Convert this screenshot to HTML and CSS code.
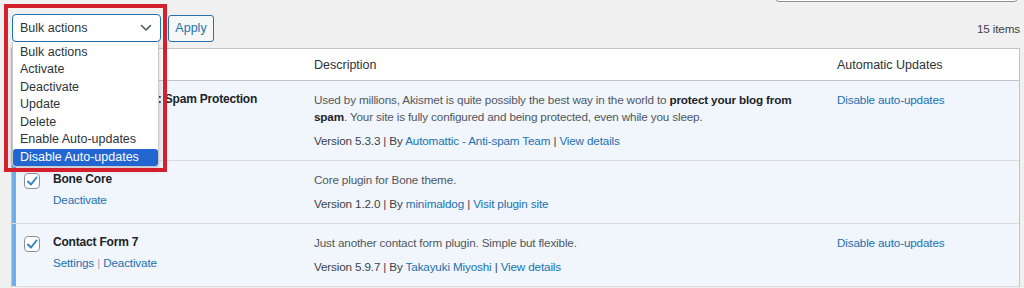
FILE: index.html
```html
<!DOCTYPE html>
<html lang="en">
<head>
<meta charset="utf-8">
<title>Plugins</title>
<link rel="stylesheet" href="styles.css">
</head>
<body>
<div class="page">
  <div class="search-row"><div class="search-edge"></div></div>
  <div class="tablenav">
    <div class="bulk">
      <div class="select">
        <span>Bulk actions</span>
        <svg class="chev" width="12" height="8" viewBox="0 0 12 8"><path d="M1.5 1.5 L6 6 L10.5 1.5" fill="none" stroke="#50575e" stroke-width="1.6" stroke-linecap="round" stroke-linejoin="round"/></svg>
      </div>
      <button class="apply">Apply</button>
    </div>
    <div class="count">15 items</div>
  </div>

  <div class="table">
    <div class="row head">
      <div class="cell check"></div>
      <div class="cell"></div>
      <div class="cell">Description</div>
      <div class="cell">Automatic Updates</div>
    </div>

    <div class="row active">
      <div class="cell check"><span class="cb"><svg width="14" height="14" viewBox="0 0 14 14"><path d="M3 7.5 L6 10.5 L11.5 3.5" fill="none" stroke="#3582c4" stroke-width="2" stroke-linecap="round" stroke-linejoin="round"/></svg></span></div>
      <div class="cell name">
        <div class="title">Akismet Anti-spam: Spam Protection</div>
        <div class="actions"><a>Deactivate</a> <span class="sep">|</span> <a>Settings</a></div>
      </div>
      <div class="cell desc">
        <div class="text">Used by millions, Akismet is quite possibly the best way in the world to <b>protect your blog from<br>spam</b>. Your site is fully configured and being protected, even while you sleep.</div>
        <div class="ver">Version 5.3.3 | By <a>Automattic - Anti-spam Team</a> | <a>View details</a></div>
      </div>
      <div class="cell auto"><a>Disable auto-updates</a></div>
    </div>

    <div class="row active">
      <div class="cell check"><span class="cb"><svg width="14" height="14" viewBox="0 0 14 14"><path d="M3 7.5 L6 10.5 L11.5 3.5" fill="none" stroke="#3582c4" stroke-width="2" stroke-linecap="round" stroke-linejoin="round"/></svg></span></div>
      <div class="cell name">
        <div class="title">Bone Core</div>
        <div class="actions"><a>Deactivate</a></div>
      </div>
      <div class="cell desc">
        <div class="text">Core plugin for Bone theme.</div>
        <div class="ver">Version 1.2.0 | By <a>minimaldog</a> | <a>Visit plugin site</a></div>
      </div>
      <div class="cell auto"></div>
    </div>

    <div class="row active">
      <div class="cell check"><span class="cb"><svg width="14" height="14" viewBox="0 0 14 14"><path d="M3 7.5 L6 10.5 L11.5 3.5" fill="none" stroke="#3582c4" stroke-width="2" stroke-linecap="round" stroke-linejoin="round"/></svg></span></div>
      <div class="cell name">
        <div class="title">Contact Form 7</div>
        <div class="actions"><a>Settings</a> <span class="sep">|</span> <a>Deactivate</a></div>
      </div>
      <div class="cell desc">
        <div class="text">Just another contact form plugin. Simple but flexible.</div>
        <div class="ver">Version 5.9.7 | By <a>Takayuki Miyoshi</a> | <a>View details</a></div>
      </div>
      <div class="cell auto"><a>Disable auto-updates</a></div>
    </div>
  </div>

  <ul class="dropdown">
    <li>Bulk actions</li>
    <li>Activate</li>
    <li>Deactivate</li>
    <li>Update</li>
    <li>Delete</li>
    <li>Enable Auto-updates</li>
    <li class="selected">Disable Auto-updates</li>
  </ul>
  <div class="callout"></div>
</div>
</body>
</html>
```

FILE: styles.css
```css
* { box-sizing: border-box; }
html, body { margin: 0; padding: 0; }
body {
  background: #f0f0f1;
  font-family: "Liberation Sans", Arial, sans-serif;
  font-size: 11.7px;
  letter-spacing: -0.15px;
  color: #3c434a;
  overflow: hidden;
}
a { color: #2271b1; text-decoration: none; }

.page {
  position: relative;
  padding: 0 4px 0 11px;
  height: 288px;
}

.search-row { display: flex; justify-content: flex-end; padding-right: 2px; }
.search-edge {
  width: 243px;
  height: 30px;
  margin-top: -28px;
  border: 1px solid #8c8f94;
  border-radius: 4px;
  background: #fff;
}

.tablenav {
  height: 46px;
  display: flex;
  align-items: flex-start;
  justify-content: space-between;
  padding-top: 12px;
}
.bulk { display: flex; align-items: center; gap: 7px; margin-left: 1px; }
.select {
  width: 149px;
  height: 28px;
  border: 1px solid #2271b1;
  border-radius: 4px;
  background: #fff;
  display: flex;
  align-items: center;
  justify-content: space-between;
  padding: 0 8px 0 7px;
  color: #2c3338;
  font-size: 12.5px;
  letter-spacing: 0;
}
.chev { display: block; }
.apply {
  height: 27px;
  width: 46px;
  padding: 0;
  border: 1px solid #2271b1;
  border-radius: 3px;
  background: #f6f7f7;
  color: #2271b1;
  font-family: inherit;
  font-size: 12.5px;
  letter-spacing: 0;
}
.count { margin-top: 8px; color: #3c434a; }

.table {
  border: 1px solid #c3c4c7;
  border-bottom: none;
  background: #fff;
}
.row {
  display: grid;
  grid-template-columns: 33px 261px 523px 1fr;
  border-bottom: 1px solid #dcdcde;
}
.row.head {
  height: 32px;
  border-bottom-color: #c3c4c7;
  align-items: center;
  color: #2c3338;
  font-size: 12.5px;
  letter-spacing: 0;
  padding-top: 1px;
}
.row.head .cell { padding-left: 8px; }
.row.active { background: #f0f6fc; }
.row.active .check { border-left: 4px solid #72aee6; }

.cell { padding: 10px 8px 11px 8px; line-height: 17px; }
.row.head .cell { padding-top: 0; padding-bottom: 0; }
.check { padding: 12px 0 0 8px; }
.cb {
  display: flex;
  align-items: center;
  justify-content: center;
  width: 16px;
  height: 16px;
  border: 1px solid #8c8f94;
  border-radius: 4px;
  background: #fff;
}
.title { font-weight: bold; color: #1d2327; font-size: 12px; letter-spacing: -0.2px; }
.actions { margin-top: 3px; }
.sep { color: #a7aaad; }
.desc .text { color: #50575e; }
.desc .text b { color: #1d2327; }
.ver { margin-top: 7px; color: #3c434a; }

.dropdown {
  position: absolute;
  left: 12px;
  top: 42px;
  width: 147px;
  margin: 0;
  padding: 1.5px 0 0 0;
  list-style: none;
  background: #fff;
  border: 1px solid #c9c9cc;
  border-top: none;
  border-radius: 0 0 4px 4px;
  box-shadow: 0 3px 6px rgba(0,0,0,0.18);
  font-size: 12.5px;
  letter-spacing: 0;
  color: #2c3338;
}
.dropdown li {
  height: 17.5px;
  line-height: 17.5px;
  padding-left: 7px;
}
.dropdown li.selected {
  background: #2166d1;
  color: #fff;
  border-radius: 3px;
}

.callout {
  position: absolute;
  left: 4px;
  top: 4px;
  width: 163px;
  height: 168px;
  border: 4px solid #d3202c;
  pointer-events: none;
}
```
